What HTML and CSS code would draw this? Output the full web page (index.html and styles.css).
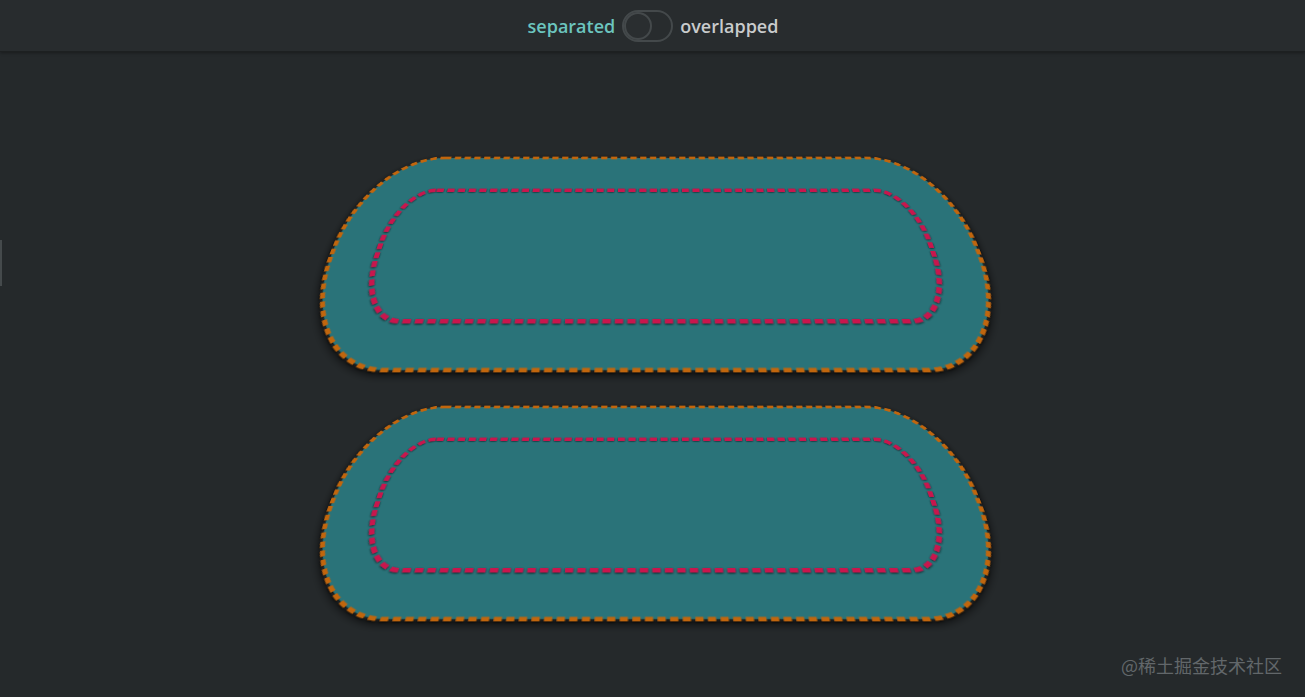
FILE: index.html
```html
<!DOCTYPE html>
<html lang="zh">
<head>
<meta charset="utf-8">
<title>border-radius</title>
<link rel="stylesheet" href="styles.css">
</head>
<body>
<header class="topbar">
  <span class="label label-active">separated</span>
  <span class="toggle"><span class="knob"></span></span>
  <span class="label">overlapped</span>
</header>
<main class="stage">
  <div class="shape">
    <svg class="shape-art" viewBox="0 0 649 277" width="649" height="277">
      <defs>
        <filter id="dashShadow" x="-5%" y="-5%" width="110%" height="110%">
          <feDropShadow dx="0" dy="1" stdDeviation="1.2" flood-color="#000" flood-opacity="0.7"/>
        </filter>
      </defs>
      <rect class="outer-line" x="2.25" y="2.25" width="644.5" height="272.5" rx="85" ry="132"/>
      <rect class="inner-line" x="47.5" y="53.5" width="554" height="170" rx="41" ry="78"/>
    </svg>
  </div>
  <div class="shape">
    <svg class="shape-art" viewBox="0 0 649 277" width="649" height="277">
      <rect class="outer-line" x="2.25" y="2.25" width="644.5" height="272.5" rx="85" ry="132"/>
      <rect class="inner-line" x="47.5" y="53.5" width="554" height="170" rx="41" ry="78"/>
    </svg>
  </div>
</main>
<div class="edge-mark"></div>
<div class="watermark">@稀土掘金技术社区</div>
</body>
</html>
```

FILE: styles.css
```css
* { box-sizing: border-box; }
html, body {
  margin: 0;
  padding: 0;
  width: 1305px;
  height: 697px;
  overflow: hidden;
  background: #25292b;
  font-family: "Open Sans", "Noto Sans", sans-serif;
}
.topbar {
  height: 52px;
  background: #282c2e;
  border-bottom: 1px solid #1d2021;
  box-shadow: 0 1px 3px rgba(0,0,0,0.35);
  display: flex;
  align-items: center;
  justify-content: center;
  gap: 7px;
  padding-left: 1px;
  position: relative;
  z-index: 1;
}
.label {
  font-size: 18px;
  font-weight: 600;
  color: #c9cbcc;
  line-height: 1;
  margin-top: 1px;
}
.label-active { color: #6cc5bf; }
.toggle {
  width: 51px;
  height: 32px;
  border: 2px solid #44494b;
  border-radius: 16px;
  display: flex;
  align-items: center;
}
.knob {
  width: 28px;
  height: 28px;
  border: 2px solid #44494b;
  border-radius: 50%;
  background: #2a2e30;
}
.stage {
  display: flex;
  flex-direction: column;
  align-items: center;
  padding-top: 60px;
  padding-left: 5px;
}
.shape {
  width: 649px;
  height: 277px;
  flex: none;
  border-radius: 87px / 134px;
  box-shadow: 0 3px 9px rgba(0,0,0,0.7);
  transform: perspective(687px) rotateX(40deg);
}
.shape + .shape { margin-top: -28px; }
.shape-art {
  display: block;
  width: 100%;
  height: 100%;
  overflow: visible;
}
.outer-line {
  fill: #2a7379;
  stroke: #c1660f;
  stroke-width: 4.5;
  stroke-dasharray: 7 4;
  filter: url(#dashShadow);
}
.inner-line {
  fill: none;
  stroke: #c8174e;
  stroke-width: 5;
  stroke-dasharray: 7.5 4;
  filter: url(#dashShadow);
}
.edge-mark {
  position: absolute;
  left: 0;
  top: 240px;
  width: 2px;
  height: 46px;
  background: #454a4c;
}
.watermark {
  position: absolute;
  right: 23px;
  bottom: 20px;
  font-family: "Noto Sans CJK SC", "Noto Sans", sans-serif;
  font-size: 18px;
  line-height: 24px;
  color: #62676a;
}
```
